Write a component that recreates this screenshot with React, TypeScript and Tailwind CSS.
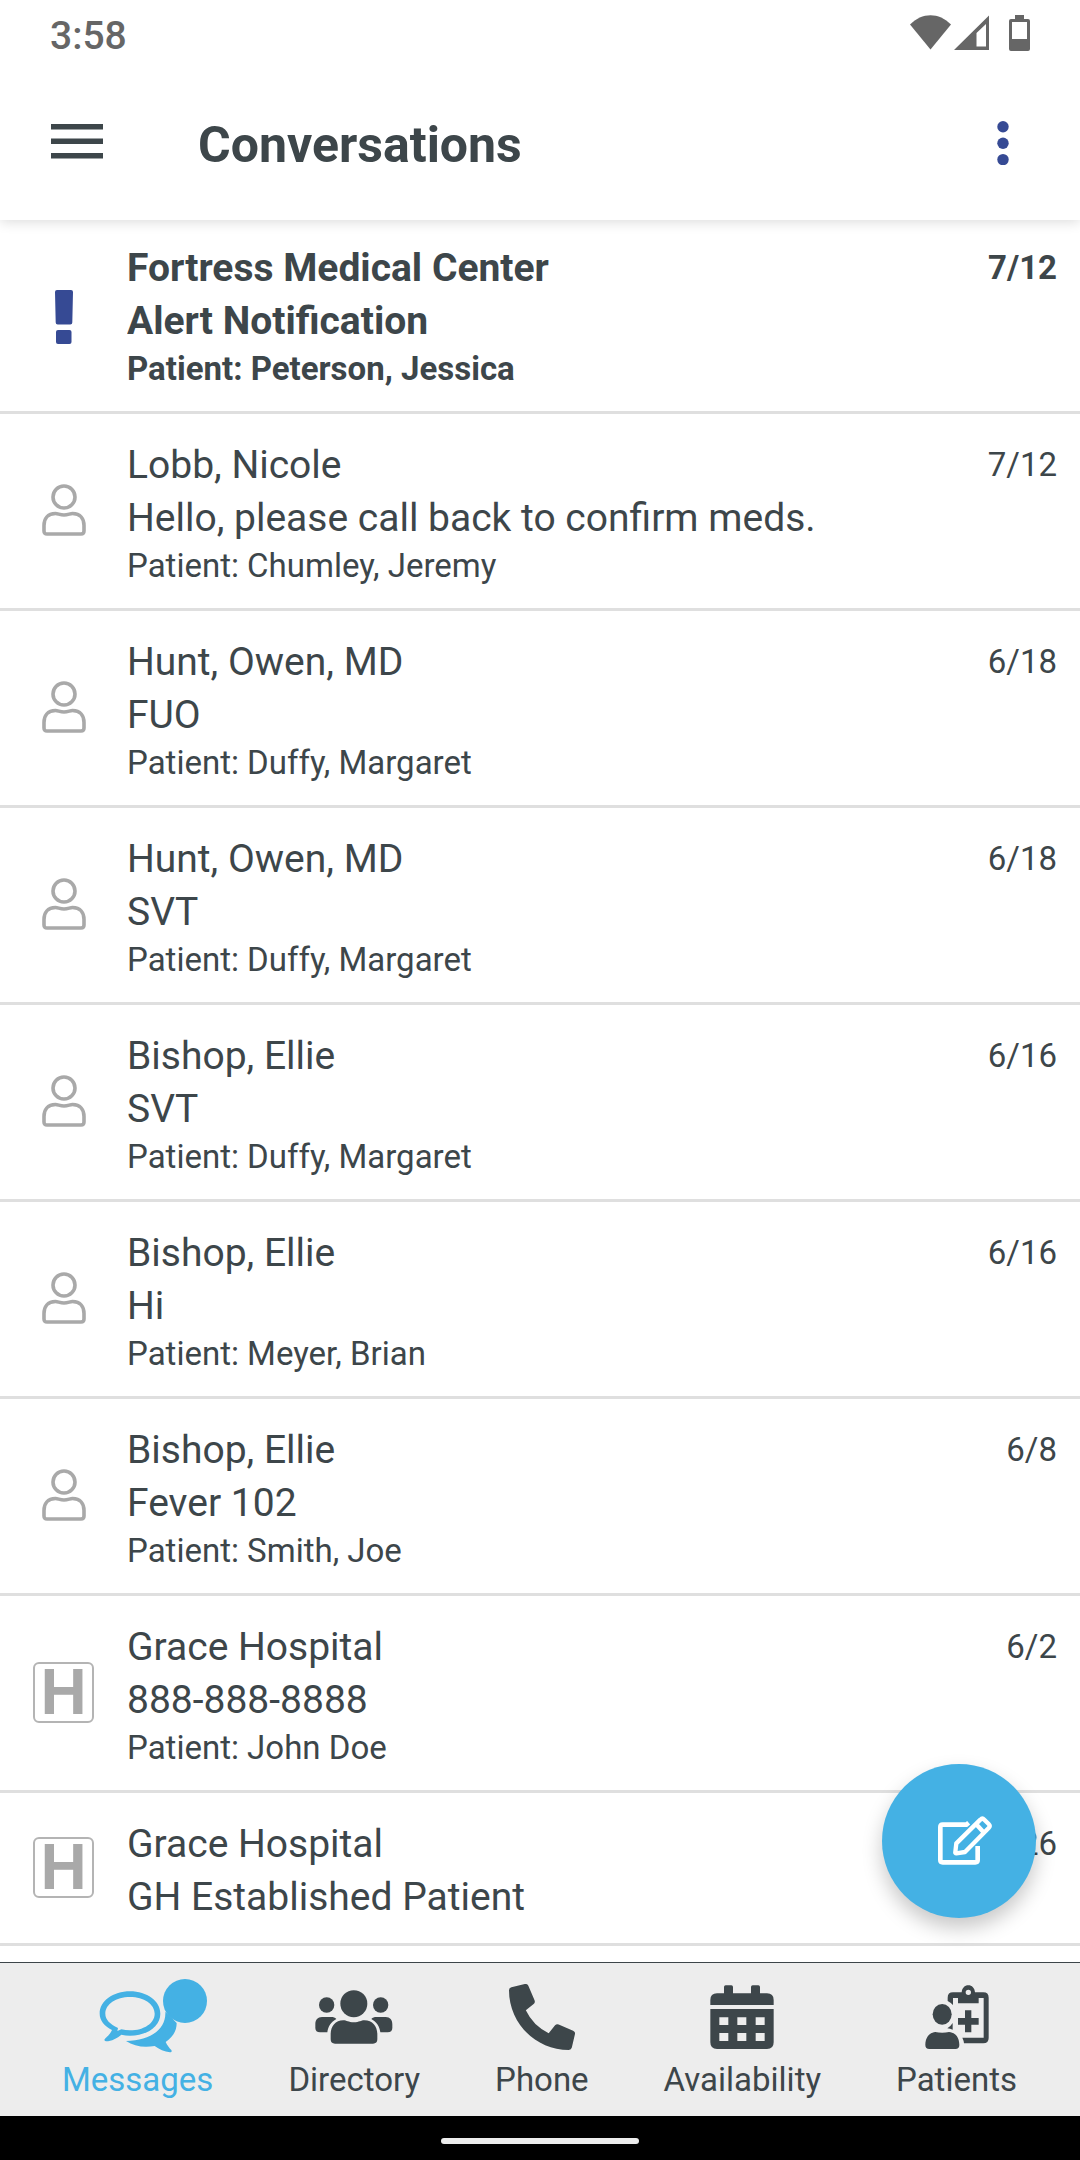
import { ReactNode } from 'react'

type Conversation = {
    from: string
    message: string
    patient?: string
    date: string
    kind: 'alert' | 'person' | 'hospital'
}

const conversations: Conversation[] = [
    { from: 'Fortress Medical Center', message: 'Alert Notification', patient: 'Peterson, Jessica', date: '7/12', kind: 'alert' },
    { from: 'Lobb, Nicole', message: 'Hello, please call back to confirm meds.', patient: 'Chumley, Jeremy', date: '7/12', kind: 'person' },
    { from: 'Hunt, Owen, MD', message: 'FUO', patient: 'Duffy, Margaret', date: '6/18', kind: 'person' },
    { from: 'Hunt, Owen, MD', message: 'SVT', patient: 'Duffy, Margaret', date: '6/18', kind: 'person' },
    { from: 'Bishop, Ellie', message: 'SVT', patient: 'Duffy, Margaret', date: '6/16', kind: 'person' },
    { from: 'Bishop, Ellie', message: 'Hi', patient: 'Meyer, Brian', date: '6/16', kind: 'person' },
    { from: 'Bishop, Ellie', message: 'Fever 102', patient: 'Smith, Joe', date: '6/8', kind: 'person' },
    { from: 'Grace Hospital', message: '888-888-8888', patient: 'John Doe', date: '6/2', kind: 'hospital' },
    { from: 'Grace Hospital', message: 'GH Established Patient', date: '5/26', kind: 'hospital' },
]

function StatusBar() {
    return (
        <div className="flex h-[66px] items-start justify-between pt-[11px] pr-[50px] pl-[50px] text-[#666666]">
            <span className="text-[39px] leading-[50px] font-medium">3:58</span>
            <svg className="mt-1 h-9 w-[120px]" viewBox="0 0 120 36" fill="currentColor" aria-hidden="true">
                <path d="M0 9.500C12-3 29-3 41 9.500L20.500 34.500Z" />
                <path fillRule="evenodd" d="M79 0.500V35H44ZM76 9L66.500 18V31.500H76Z" />
                <path fillRule="evenodd" d="M105 0h9v4h4q2 0 2 2v28q0 2-2 2h-17q-2 0-2-2V6q0-2 2-2h4ZM102 7v17h15V7Z" />
            </svg>
        </div>
    )
}

function Header() {
    return (
        <header className="relative z-10 bg-white shadow-[0_2px_12px_rgba(0,0,0,0.14)]">
            <StatusBar />
            <div className="flex h-[154px] items-start pt-[44px] pr-[51px] pl-[51px]">
                <button aria-label="Open menu" className="mt-[14px] text-[#3d464a]">
                    <svg className="h-[35px] w-[52px]" viewBox="0 0 52 35" fill="currentColor">
                        <path d="M0 0h52v5.500H0zM0 14.500h52v5.500H0zM0 29h52v5.500H0z" />
                    </svg>
                </button>
                <h1 className="ml-[95px] flex-1 text-[50px] leading-[70px] font-bold">Conversations</h1>
                <button aria-label="More options" className="mt-[11px] px-5 text-[#364a94]">
                    <svg className="h-11 w-3" viewBox="0 0 12 44" fill="currentColor">
                        <circle cx="6" cy="5.800" r="5.700" />
                        <circle cx="6" cy="22.200" r="5.700" />
                        <circle cx="6" cy="38.600" r="5.700" />
                    </svg>
                </button>
            </div>
        </header>
    )
}

function RowIcon({ kind }: { kind: Conversation['kind'] }) {
    if (kind === 'alert') {
        return (
            <svg className="h-[62px] w-[18px]" viewBox="0 -8 18 62" fill="#364a94" role="img" aria-label="Alert">
                <path d="M2 0h14q2 0 2 2l-.7 30.500q0 2-2 2H2.700q-2 0-2-2L0 2q0-2 2-2Z" />
                <rect x="1" y="40" width="15.500" height="14" rx="2" />
            </svg>
        )
    }
    if (kind === 'hospital') {
        return (
            <span className="flex size-[61px] items-center justify-center rounded-md border-2 border-[#b4b4b4] font-['Liberation_Sans',sans-serif] text-[64px] leading-none font-bold text-[#a9a9a9]">
                H
            </span>
        )
    }
    return (
        <svg className="h-[52px] w-11" viewBox="0 0 44 52" fill="none" stroke="#a9a9a9" strokeWidth="3.600" aria-hidden="true">
            <circle cx="22" cy="13" r="11" />
            <path d="M13.500 29.500c2.500 0 4.500 1.500 8.500 1.500s6-1.500 8.500-1.500c8 0 11.500 5.500 11.500 12v5.500q0 3-3 3h-34q-3 0-3-3v-5.500c0-6.500 3.500-12 11.500-12Z" />
        </svg>
    )
}

function ConversationRow({ item }: { item: Conversation }) {
    const unread = item.kind === 'alert'
    return (
        <li className={`flex border-b-[3px] border-[#dfdfdf] pt-[25px] pb-[19px] ${unread ? 'font-bold' : ''}`}>
            <div className="flex w-[127px] shrink-0 items-center justify-center pb-2">
                <RowIcon kind={item.kind} />
            </div>
            <div className="min-w-0 flex-1">
                <p className="text-[39px] leading-[53px]">{item.from}</p>
                <p className="truncate text-[39px] leading-[53px]">{item.message}</p>
                {item.patient && <p className="mb-[2px] text-[33px] leading-[42px]">Patient: {item.patient}</p>}
            </div>
            <time className="pr-[23px] text-[33px] leading-[51px]">{item.date}</time>
        </li>
    )
}

function NavItem({ label, active, children }: { label: string; active?: boolean; children: ReactNode }) {
    return (
        <a
            href={'#' + label.toLowerCase()}
            aria-current={active ? 'page' : undefined}
            className={`flex flex-col items-center gap-[3px] ${active ? 'text-[#44b1e4]' : 'text-[#3d464a]'}`}
        >
            <span className="relative flex h-[76px] items-center justify-center">{children}</span>
            <span className="text-[33px] leading-[44px]">{label}</span>
        </a>
    )
}

function BottomNav() {
    return (
        <nav className="flex h-[154px] items-start justify-between border-t border-[#3d464a] bg-[#ededed] pt-4 pr-[63px] pl-[62px]">
            <NavItem label="Messages" active>
                <svg className="mt-[10px] h-[62px] w-[78px]" viewBox="178 118 234 186" fill="currentColor" aria-hidden="true">
                    <path fillRule="evenodd" d="M271 119c51 0 91 29 91 67s-40 66-91 66c-9 0-18-1-26-3-12 10-29 20-46 20-5-1-6-5-3-8 9-8 17-16 21-26-23-12-37-29-37-49 0-38 40-67 91-67Zm0 17c-42 0-74 22-74 50 0 18 14 31 38 43l-2 9 12-5c8 2 17 3 26 3 42 0 74-22 74-50s-32-50-74-50Z" />
                    <path d="M259 268c72-2 121-34 118-88l20 20 14 14c0 25-12 42-33 57 5 11 11 18 17 24 2 4 1 7-4 7-17-2-32-9-46-19-32 6-62 1-86-15Z" />
                </svg>
                <span className="absolute top-0 left-[64px] size-11 rounded-full bg-[#44b1e4]" />
            </NavItem>
            <NavItem label="Directory">
                <svg className="h-[54px] w-[78px]" viewBox="827 122 234 162" fill="currentColor" aria-hidden="true">
                    <circle cx="862" cy="167" r="23" />
                    <circle cx="1024" cy="167" r="23" />
                    <circle cx="943.500" cy="163" r="40.500" />
                    <path d="M848 203h28c6 0 11 2 15 6-16 9-25 22-27 40h-22c-9 0-14-5-14-13v-11c0-13 7-22 20-22Z" />
                    <path d="M1039 203h-28c-6 0-11 2-15 6 16 9 25 22 27 40h22c9 0 14-5 14-13v-11c0-13-7-22-20-22Z" />
                    <path d="M912 213c10 0 15 6 31.500 6s21.500-6 31.500-6c25 0 39 19 39 42v15q0 13-13 13H887q-13 0-13-13v-15c0-23 14-42 38-42Z" />
                </svg>
            </NavItem>
            <NavItem label="Phone">
                <svg className="size-[66px]" viewBox="0 0 512 512" fill="currentColor" aria-hidden="true">
                    <path d="M497.390 361.800l-112-48a24 24 0 0 0-28 6.900l-49.600 60.600A370.660 370.660 0 0 1 130.600 204.110l60.600-49.600a23.940 23.940 0 0 0 6.900-28l-48-112A24.160 24.160 0 0 0 122.600.610l-104 24A24 24 0 0 0 0 48c0 256.500 207.900 464 464 464a24 24 0 0 0 23.400-18.600l24-104a24.290 24.290 0 0 0-14.010-27.600z" />
                </svg>
            </NavItem>
            <NavItem label="Availability">
                <svg className="size-16" viewBox="806 108 192 192" fill="currentColor" aria-hidden="true">
                    <path d="M807 168v-15q0-20 20-20h21v-19q0-5 5-5h17q5 0 5 5v19h54v-19q0-5 5-5h17q5 0 5 5v19h21q20 0 20 20v15Z" />
                    <path fillRule="evenodd" d="M807 180h190v100q0 20-20 20H827q-20 0-20-20ZM834 205v23h27v-23ZM888 205v23h27v-23ZM943 205v23h27v-23ZM834 252v24h27v-24ZM888 252v24h27v-24ZM943 252v24h27v-24Z" />
                </svg>
            </NavItem>
            <NavItem label="Patients">
                <svg className="size-16" viewBox="316 104 192 192" fill="currentColor" aria-hidden="true">
                    <path fillRule="evenodd" d="M384 152v-10q0-16 16-16h26c1-13 9-21 20-21s19 8 20 21h25q16 0 16 16v121q0 16-16 16h-58q-1-9-5-17h64V143h-15v16h-62v-16h-15v21q-7-7-16-12ZM446 118a8 8 0 1 0 0 16a8 8 0 0 0 0-16Z" />
                    <path d="M436 180h19v23h22v20h-22v23h-19v-23h-21v-20h21ZM399 218v20q-7-3-16-4 10-6 16-16Z" />
                    <ellipse cx="367.500" cy="192" rx="28.500" ry="31" />
                    <path d="M347 245c12 3 29 3 41 0 21 2 31 18 31 39q0 12-12 12h-78q-12 0-12-12c0-21 11-37 30-39Z" />
                </svg>
            </NavItem>
        </nav>
    )
}

export default function App() {
    return (
        <div className="flex min-h-screen flex-col bg-white font-[Roboto,sans-serif] text-[#3d464a]">
            <Header />
            <main className="relative flex-1">
                {/* top of the list tucks under the header */}
                <ul className="-mt-[3px]">
                    {conversations.map((item, i) => (
                        <ConversationRow key={i} item={item} />
                    ))}
                </ul>
                <button
                    aria-label="New conversation"
                    className="absolute right-11 bottom-11 flex size-[154px] items-center justify-center rounded-full bg-[#44b1e4] pl-[11px] shadow-[0_10px_20px_rgba(0,0,0,0.22)]"
                >
                    <svg className="size-[54px]" viewBox="354 280 162 162" fill="none" stroke="#ffffff" aria-hidden="true">
                        <path strokeWidth="14" d="M446 306l-7 6h-71q-7 0-7 7v99q0 7 7 7h98q7 0 7-7v-42" />
                        <path strokeWidth="13" strokeLinejoin="round" d="M481 297q6-6 12 0l13 13q6 6 0 12l-71 72-26 4q-4 0-3-4l3-26ZM468 310l24 26" />
                    </svg>
                </button>
            </main>
            <BottomNav />
            <footer className="flex h-11 items-center justify-center bg-black pt-[5px]">
                <span className="h-[6px] w-[198px] rounded-full bg-[#ededed]" />
            </footer>
        </div>
    )
}
